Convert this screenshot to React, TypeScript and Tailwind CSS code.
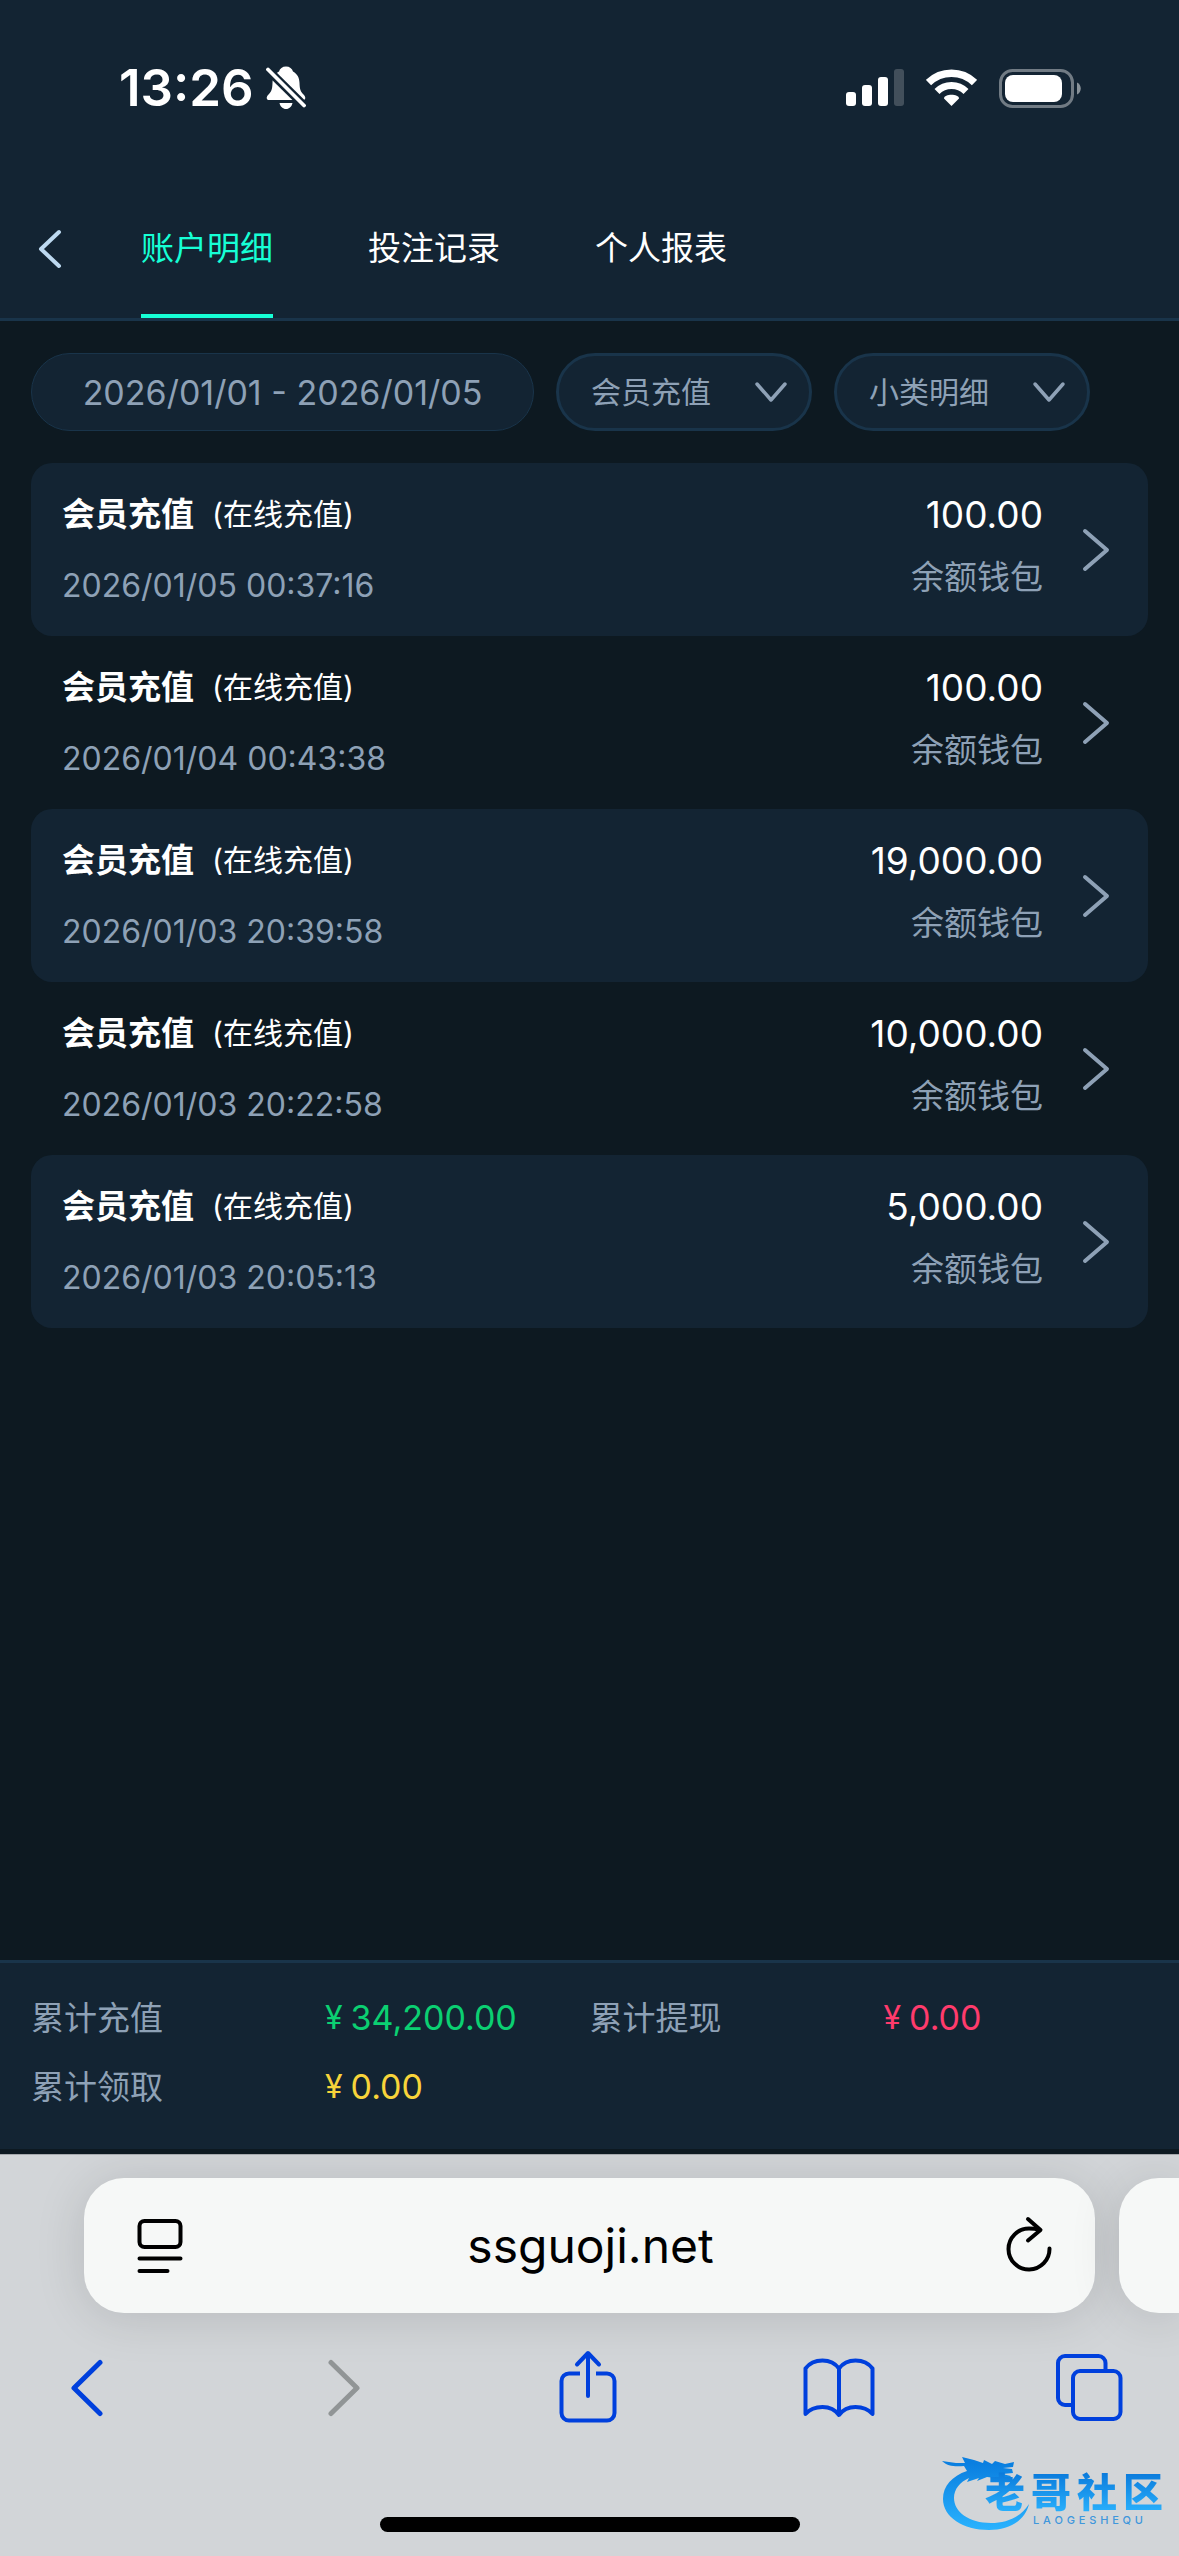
import type { ReactNode } from 'react'

const tabs = ['账户明细', '投注记录', '个人报表']

const records = [
  { time: '2026/01/05 00:37:16', amount: '100.00' },
  { time: '2026/01/04 00:43:38', amount: '100.00' },
  { time: '2026/01/03 20:39:58', amount: '19,000.00' },
  { time: '2026/01/03 20:22:58', amount: '10,000.00' },
  { time: '2026/01/03 20:05:13', amount: '5,000.00' },
]

const totals = [
  { label: '累计充值', value: '34,200.00', color: 'text-[#0bd072]' },
  { label: '累计提现', value: '0.00', color: 'text-[#ff3b6c]' },
  { label: '累计领取', value: '0.00', color: 'text-[#f8d43a]' },
]

function StatusBar() {
  return (
    <div className="flex h-[176px] items-center justify-between pl-[119px] pr-[98px]">
      <div className="flex items-center gap-3">
        <span className="text-[51px] leading-[60px] font-semibold">13:26</span>
        <svg width="40" height="44" viewBox="0 0 40 44" fill="none">
          <path
            d="M20 0.5c-3.600 0-6.200 2-7 5C8.500 8 6.600 12 6.500 17c-.2 6-1 8.500-3.500 11C1 30 .5 31 .8 32.500 1 33.700 2 34 3.500 34h33c1.500 0 2.500-.3 2.700-1.500.3-1.500-.2-2.500-2.200-4.500-2.500-2.500-3.300-5-3.500-11-.1-5-2-9-6.500-11.500-.8-3-3.400-5-7-5z"
            fill="white"
          />
          <path d="M13.500 37h13c-.7 3.600-3.300 6-6.500 6s-5.800-2.400-6.500-6z" fill="white" />
          <path d="M1 3 38.500 40" stroke="#132433" strokeWidth="8.500" />
          <path d="M2 3.500 38 39.500" stroke="white" strokeWidth="3.800" strokeLinecap="round" />
        </svg>
      </div>
      <div className="flex items-center gap-[22px]">
        <svg width="58" height="38" viewBox="0 0 58 38" fill="white">
          <rect x="0" y="23" width="10" height="14" rx="3" />
          <rect x="16" y="16" width="10" height="21" rx="3" />
          <rect x="32" y="8" width="10" height="29" rx="3" />
          <rect x="48" y="0" width="10" height="37" rx="3" opacity="0.2" />
        </svg>
        <svg width="51" height="38" viewBox="0 0 51 38" fill="none" stroke="white">
          <path d="M2.500 13.500a33 33 0 0 1 46 0" strokeWidth="7.500" />
          <path d="M11 22.500a20.500 20.500 0 0 1 29 0" strokeWidth="7" />
          <path d="M25.500 37 18 29.500c0-5 15-5 15 0z" fill="white" stroke="none" />
        </svg>
        <svg width="82" height="39" viewBox="0 0 82 39">
          <rect x="1.500" y="1.500" width="72" height="36" rx="12" fill="none" stroke="white" strokeOpacity="0.4" strokeWidth="3" />
          <rect x="6" y="6" width="57" height="27" rx="8" fill="white" />
          <path d="M78 13.500c5 2 5 10 0 12z" fill="white" opacity="0.5" />
        </svg>
      </div>
    </div>
  )
}

function Header() {
  return (
    <nav className="flex h-[142px] items-stretch pl-8">
      <button aria-label="返回" className="flex w-[109px] items-center pt-1 pl-1">
        <svg width="28" height="44" viewBox="0 0 28 44" fill="none">
          <path d="M23 5 5 22l18 17" stroke="#bdd9f0" strokeWidth="4" strokeLinecap="round" strokeLinejoin="round" />
        </svg>
      </button>
      <div className="flex gap-[95px]">
        {tabs.map((tab, index) => (
          <button
            key={tab}
            className={
              index === 0
                ? 'border-b-4 border-[#16ffd5] pt-2 text-[33px] text-[#16ffd5]'
                : 'border-b-4 border-transparent pt-2 text-[33px] text-white'
            }
          >
            {tab}
          </button>
        ))}
      </div>
    </nav>
  )
}

function FilterSelect({ label }: { label: string }) {
  return (
    <div className="relative flex w-[256px]">
      <select
        aria-label={label}
        className="h-[78px] w-full appearance-none rounded-full border-3 border-[#19344a] bg-[#132433] pl-8 text-[30px] text-[#8ea1b6]"
      >
        <option>{label}</option>
      </select>
      <svg className="pointer-events-none absolute top-7 right-6" width="34" height="24" viewBox="0 0 34 24" fill="none">
        <path d="M3 3l14 16L31 3" stroke="#8ea1b6" strokeWidth="3.500" strokeLinecap="round" strokeLinejoin="round" />
      </svg>
    </div>
  )
}

function RecordRow({ time, amount }: { time: string; amount: string }) {
  return (
    <li className="rounded-[21px] odd:bg-[#132433]">
      <a href="#" className="flex h-[173px] items-center pr-9 pl-[31px]">
        <div className="flex flex-1 flex-col gap-[26px]">
          <div className="flex items-center gap-[18px] leading-[46px]">
            <span className="text-[33px] font-bold">会员充值</span>
            <span className="text-[30px]">(在线充值)</span>
          </div>
          <span className="text-[32px] leading-[46px] text-[#8ea1b6]">{time}</span>
        </div>
        <div className="flex flex-col gap-4 pb-2 text-right">
          <span className="text-[37px] leading-[46px]">{amount}</span>
          <span className="text-[33px] leading-[46px] text-[#8ea1b6]">余额钱包</span>
        </div>
        <svg className="ml-[35px]" width="34" height="48" viewBox="0 0 34 48" fill="none">
          <path d="M7 5l22 19L7 43" stroke="#8ea1b6" strokeWidth="4" strokeLinecap="round" strokeLinejoin="round" />
        </svg>
      </a>
    </li>
  )
}

function ToolButton({ label, children }: { label: string; children: ReactNode }) {
  return (
    <button aria-label={label} className="flex h-20 w-20 items-center justify-center text-[#0040dd]">
      {children}
    </button>
  )
}

function SiteLogo() {
  return (
    <div className="absolute right-4 bottom-6 h-[76px] w-[222px]">
      <svg className="absolute inset-0" width="222" height="76" viewBox="0 0 222 76" fill="none">
        <defs>
          <linearGradient id="ring" x1="0" y1="0" x2="0" y2="76" gradientUnits="userSpaceOnUse">
            <stop offset="0.1" stopColor="#0a7fe0" />
            <stop offset="1" stopColor="#2bb4ff" />
          </linearGradient>
        </defs>
        <path
          d="M26 15C11 20 2 30 2 43c0 18 20 31 46 31 20 0 36-9 40-26-8 13-22 19-38 19-22 0-37-11-37-25 0-9 6-16 15-20l-2 4 12-4-2 3 10-4 9 1 12 2 3-4-9-2 11-1-1-4-9-1 10-1 1-5-9 2-10-3-3 3-8-4-1 3-9-3-12-3 3 6-9 0L1 5c5 5 13 6 22 5z"
          fill="url(#ring)"
        />
      </svg>
      <div className="absolute top-[15px] right-0 flex gap-[6px] bg-linear-to-b from-[#0a78da] to-[#2bb4ff] bg-clip-text text-[40px] leading-[44px] font-black text-transparent">
        <span>老</span>
        <span>哥</span>
        <span>社</span>
        <span>区</span>
      </div>
      <div className="absolute right-5 bottom-[6px] flex w-[110px] justify-between text-[11px] leading-[12px] font-medium text-[#3f97dc]">
        {'LAOGESHEQU'.split('').map((letter, index) => (
          <span key={index}>{letter}</span>
        ))}
      </div>
    </div>
  )
}

function BrowserBar() {
  return (
    <footer className="relative overflow-hidden border-t border-[#a5a8ac] bg-[#d2d5d8] pt-[23px] pb-6 text-black">
      <div className="flex gap-6 pl-[84px]">
        <div className="flex h-[135px] flex-1 items-center rounded-[40px] bg-[#f6f8f7] pr-[43px] pl-[53px] shadow-[0_4px_50px_rgba(0,0,0,0.13)]">
          <button aria-label="页面菜单">
            <svg width="46" height="56" viewBox="0 0 46 56" fill="none" stroke="black" strokeWidth="4" strokeLinecap="round">
              <rect x="2.500" y="3" width="41" height="26" rx="5" />
              <path d="M2.500 40.500h41M2.500 53h28" />
            </svg>
          </button>
          <input
            aria-label="网址"
            defaultValue="ssguoji.net"
            className="min-w-0 flex-1 bg-transparent pr-2 text-center text-[48px] leading-[60px] outline-none"
          />
          <button aria-label="重新载入">
            <svg width="46" height="60" viewBox="0 0 46 60" fill="none" stroke="black" strokeWidth="4" strokeLinecap="round" strokeLinejoin="round">
              <path d="M43.500 32.500A20.500 20.500 0 1 1 23 12.500c4 0 7 .3 10 1.200" />
              <path d="M22 3 34.500 14 22 24.500" />
            </svg>
          </button>
        </div>
        <div className="h-[135px] w-[60px] rounded-l-[40px] bg-[#f6f8f7] shadow-[0_4px_50px_rgba(0,0,0,0.13)]" />
      </div>

      <div className="flex items-center justify-between pt-[34px] pr-[50px] pl-[47px]">
        <ToolButton label="后退">
          <svg width="34" height="60" viewBox="0 0 34 60" fill="none" stroke="currentColor" strokeWidth="5" strokeLinecap="round" strokeLinejoin="round">
            <path d="M30 5.500 4 31l26 25.500" />
          </svg>
        </ToolButton>
        <ToolButton label="前进">
          <svg width="46" height="60" viewBox="0 0 46 60" fill="none" stroke="#919596" strokeWidth="5" strokeLinecap="round" strokeLinejoin="round">
            <path d="M16 5.500 42 31 16 56.500" />
          </svg>
        </ToolButton>
        <ToolButton label="分享">
          <svg width="58" height="74" viewBox="0 0 58 74" fill="none" stroke="currentColor" strokeWidth="4" strokeLinejoin="round">
            <path d="M21 23.500h-11a7.500 7.500 0 0 0-7.500 7.500v32a7.500 7.500 0 0 0 7.500 7.500h38a7.500 7.500 0 0 0 7.500-7.500V31a7.500 7.500 0 0 0-7.500-7.500H37" />
            <path d="M29 46V4M18 14.500 29 3l11 11.500" strokeLinecap="round" />
          </svg>
        </ToolButton>
        <ToolButton label="书签">
          <svg width="72" height="62" viewBox="0 0 72 62" fill="none" stroke="currentColor" strokeWidth="4" strokeLinejoin="round">
            <path d="M36 12.500C32 7 26 4.500 19.500 4.500S6.500 7 2.500 12.500V58c4-4.500 10.500-7 17-7S32 53.500 36 59c4-5.500 10-8 16.500-8s13 2.500 17 7V12.500C65.500 7 59 4.500 52.500 4.500S40 7 36 12.500zM36 12.500V58" />
          </svg>
        </ToolButton>
        <ToolButton label="标签页">
          <svg width="68" height="68" viewBox="0 0 68 68" fill="none" stroke="currentColor" strokeWidth="4">
            <rect x="18" y="18" width="47.500" height="48" rx="7" />
            <path d="M50.500 18v-8a7 7 0 0 0-7-7H10a7 7 0 0 0-7 7v35a7 7 0 0 0 7 7h8" />
          </svg>
        </ToolButton>
      </div>

      <div className="mx-auto mt-[90px] h-[15px] w-[420px] rounded-full bg-black" />
      <SiteLogo />
    </footer>
  )
}

export default function App() {
  return (
    <div className="flex min-h-screen flex-col bg-[#0d1921] font-['Inter','Noto_Sans_CJK_SC',sans-serif] text-white">
      <header className="border-b-3 border-[#19344a] bg-[#132433]">
        <StatusBar />
        <Header />
      </header>

      <main className="flex flex-1 flex-col gap-8 px-[31px] pt-8">
        <div className="flex gap-[22px]">
          <button className="h-[78px] w-[503px] rounded-full border border-[#19344a] bg-[#132433] text-[34px] text-[#8ea1b6]">
            2026/01/01 - 2026/01/05
          </button>
          <FilterSelect label="会员充值" />
          <FilterSelect label="小类明细" />
        </div>

        <ul>
          {records.map((record) => (
            <RecordRow key={record.time} time={record.time} amount={record.amount} />
          ))}
        </ul>
      </main>

      <section className="mb-[5px] grid grid-cols-2 gap-y-[23px] border-t-3 border-[#19344a] bg-[#132433] px-[31px] pt-8 pb-[39px]">
        {totals.map((total) => (
          <div key={total.label} className="flex items-center leading-[46px]">
            <span className="w-[294px] text-[33px] text-[#8ea1b6]">{total.label}</span>
            <span className={`flex items-center gap-2 ${total.color}`}>
              <span className="text-[32px]">¥</span>
              <span className="text-[34px]">{total.value}</span>
            </span>
          </div>
        ))}
      </section>

      <BrowserBar />
    </div>
  )
}
